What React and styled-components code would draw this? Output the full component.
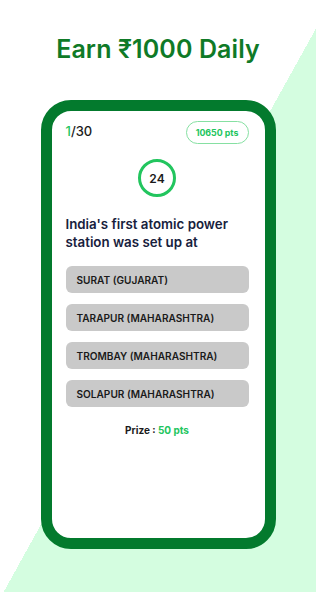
import styled, { createGlobalStyle } from "styled-components";

const Global = createGlobalStyle`
  html, body {
    margin: 0;
    padding: 0;
  }
  body {
    font-family: Inter, "Noto Sans", sans-serif;
  }
`;

const Page = styled.div`
  width: 316px;
  height: 592px;
  overflow: hidden;
  display: flex;
  flex-direction: column;
  align-items: center;
  background: linear-gradient(119deg, #ffffff 51.5%, #d4fde0 51.5%);
`;

const Title = styled.h1`
  margin: 34px 0 0;
  font-size: 25px;
  line-height: 30px;
  font-weight: 600;
  color: #0f7a27;
  letter-spacing: 0.1px;
`;

const Card = styled.div`
  box-sizing: border-box;
  margin-top: 36px;
  width: 235px;
  height: 449px;
  border: 11px solid #037a2d;
  border-radius: 30px;
  background: #ffffff;
  padding: 10px 16px 0 14px;
  display: flex;
  flex-direction: column;
`;

const TopRow = styled.div`
  display: flex;
  justify-content: space-between;
  align-items: flex-start;
`;

const Counter = styled.div`
  font-size: 13px;
  font-weight: 500;
  color: #1b1b1b;
  margin-top: 2px;
  span {
    color: #22c55e;
  }
`;

const Points = styled.div`
  box-sizing: border-box;
  height: 23px;
  width: 63px;
  border: 1px solid #86e0a2;
  border-radius: 12px;
  display: flex;
  align-items: center;
  justify-content: center;
  font-size: 8.8px;
  font-weight: 700;
  color: #22c55e;
`;

const Timer = styled.div`
  box-sizing: border-box;
  align-self: center;
  margin-top: 15px;
  width: 38px;
  height: 38px;
  border: 3px solid #22c55e;
  border-radius: 50%;
  display: flex;
  align-items: center;
  justify-content: center;
  font-size: 12px;
  font-weight: 600;
  color: #1b1b1b;
`;

const Question = styled.p`
  margin: 18px 0 0;
  font-size: 13.3px;
  line-height: 18px;
  font-weight: 600;
  color: #17213d;
`;

const Options = styled.div`
  margin-top: 15px;
  display: flex;
  flex-direction: column;
  gap: 11px;
`;

const Option = styled.button`
  height: 27px;
  border: none;
  border-radius: 6px;
  background: #c9c9c9;
  padding: 0 11px;
  text-align: left;
  font-family: inherit;
  font-size: 10.1px;
  font-weight: 600;
  color: #1a1a1a;
`;

const Prize = styled.div`
  margin-top: 17px;
  text-align: center;
  font-size: 10px;
  font-weight: 700;
  color: #1b1b1b;
  span {
    color: #22c55e;
  }
`;

const options = [
  "SURAT (GUJARAT)",
  "TARAPUR (MAHARASHTRA)",
  "TROMBAY (MAHARASHTRA)",
  "SOLAPUR (MAHARASHTRA)",
];

export default function App() {
  return (
    <>
      <Global />
      <Page>
        <Title>Earn ₹1000 Daily</Title>
        <Card>
          <TopRow>
            <Counter>
              <span>1</span>/30
            </Counter>
            <Points>10650 pts</Points>
          </TopRow>
          <Timer>24</Timer>
          <Question>
            India's first atomic power
            <br />
            station was set up at
          </Question>
          <Options>
            {options.map((o) => (
              <Option key={o}>{o}</Option>
            ))}
          </Options>
          <Prize>
            Prize : <span>50 pts</span>
          </Prize>
        </Card>
      </Page>
    </>
  );
}
